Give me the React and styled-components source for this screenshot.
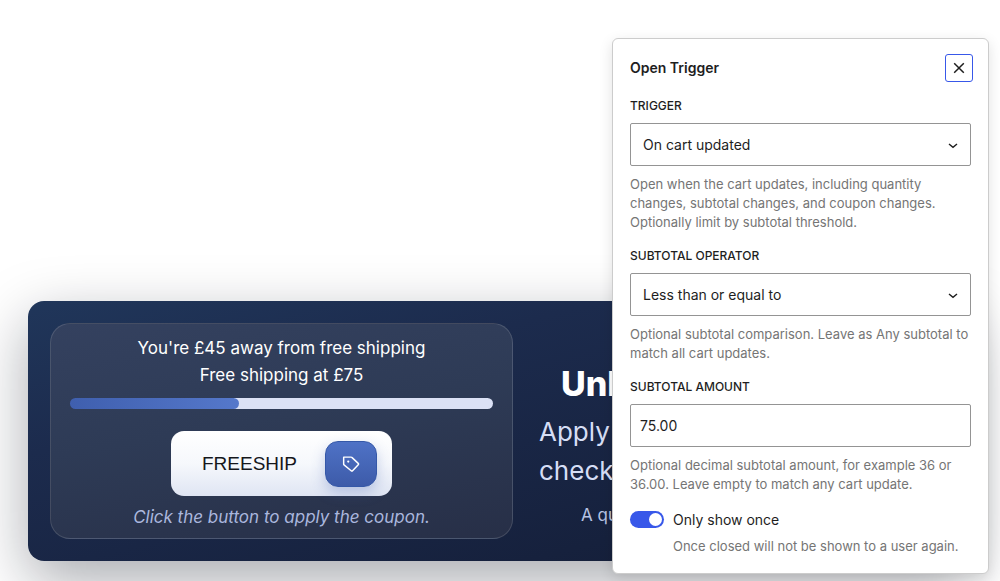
import React, { useState } from "react";
import styled, { createGlobalStyle } from "styled-components";

const GlobalStyle = createGlobalStyle`
  *, *::before, *::after {
    box-sizing: border-box;
  }

  body {
    margin: 0;
    background: #fff;
    color: #1e1e1e;
    font-family: Inter, "Liberation Sans", sans-serif;
    overflow: hidden;
  }
`;

const Page = styled.main`
  position: relative;
  min-height: 100vh;
  padding: 301px 28px 20px;
`;

const Banner = styled.section`
  display: grid;
  grid-template-columns: 463fr 411fr;
  gap: 26px;
  padding: 22px;
  border-radius: 16px;
  background: linear-gradient(165deg, #20365a 0%, #1c2b4d 30%, #131c35 100%);
  box-shadow: 0 20px 60px rgba(10, 15, 30, 0.35);
`;

const CouponCard = styled.div`
  display: flex;
  flex-direction: column;
  align-items: center;
  padding: 11px 19px 7px;
  border: 1px solid rgba(255, 255, 255, 0.13);
  border-radius: 20px;
  background: linear-gradient(170deg, #34415f 0%, #2e3b56 45%, #272f47 100%);
  color: #fff;
`;

const Message = styled.p`
  margin: 0;
  font-size: 17px;
  line-height: 27px;
`;

const Track = styled.div`
  width: 100%;
  height: 11px;
  margin: 9px 0 22px;
  border-radius: 6px;
  background: linear-gradient(90deg, transparent 20px, #dbe1f5 20px);
`;

const Fill = styled.div`
  height: 100%;
  border-radius: 6px;
  background: linear-gradient(90deg, #3f5fae, #5578cb);
`;

const CouponBox = styled.div`
  display: flex;
  align-items: center;
  gap: 28px;
  height: 65px;
  padding: 0 15px 0 31px;
  border-radius: 13px;
  background: linear-gradient(180deg, #fff 0%, #f6f8fc 50%, #dfe5f3 100%);
`;

const Code = styled.span`
  color: #15171c;
  font: 19px "Liberation Sans", sans-serif;
`;

const ApplyButton = styled.button`
  display: flex;
  align-items: center;
  justify-content: center;
  width: 52px;
  height: 46px;
  padding: 0;
  border: 1px solid #3558a8;
  border-radius: 13px;
  background: linear-gradient(180deg, #4f72c6, #3d5ba9);
  box-shadow: 0 6px 14px rgba(70, 100, 180, 0.3);
  color: #fff;
`;

const CardNote = styled.p`
  margin: 8px 0 0;
  color: #aab7de;
  font-size: 17px;
  font-style: italic;
  line-height: 27px;
`;

const Pitch = styled.div`
  padding-top: 40px;
  white-space: nowrap;
`;

const Heading = styled.h2`
  margin: 0 0 7px;
  padding-left: 22px;
  color: #fff;
  font-size: 34px;
  font-weight: 800;
  line-height: 42px;
`;

const Lead = styled.p`
  margin: 0;
  color: #d6def5;
  font-size: 26px;
  line-height: 39px;
`;

const Small = styled.p`
  margin: 12px 0 0;
  padding-left: 42px;
  color: #b6c2e4;
  font-size: 17px;
  line-height: 26px;
`;

const Popover = styled.form`
  position: absolute;
  top: 38px;
  right: 11px;
  display: flex;
  flex-direction: column;
  gap: 16px;
  width: 377px;
  padding: 15px 17px 17px;
  border: 1px solid #ccc;
  border-radius: 6px;
  background: #fff;
  box-shadow: 0 4px 14px rgba(0, 0, 0, 0.12);
`;

const PopoverHeader = styled.header`
  display: flex;
  align-items: center;
  justify-content: space-between;
  height: 28px;
  margin-right: -2px;
`;

const Title = styled.h3`
  margin: 0;
  font-size: 14px;
  font-weight: 600;
  line-height: 20px;
`;

const CloseButton = styled.button`
  display: flex;
  align-items: center;
  justify-content: center;
  width: 28px;
  height: 28px;
  padding: 0;
  border: 1px solid #3858e9;
  border-radius: 3px;
  background: #fff;
  color: #1e1e1e;
`;

const Field = styled.div`
  display: flex;
  flex-direction: column;
  gap: 9px;
`;

const Label = styled.label`
  font-size: 12px;
  font-weight: 500;
  line-height: 16px;
  text-transform: uppercase;
`;

const SelectWrapper = styled.div`
  position: relative;
`;

const Select = styled.select`
  display: block;
  width: 100%;
  height: 43px;
  padding: 0 32px 0 12px;
  border: 1px solid #949494;
  border-radius: 2px;
  appearance: none;
  background: #fff;
  color: #1e1e1e;
  font: 14px Inter, sans-serif;
`;

const Chevron = styled.svg`
  position: absolute;
  top: 50%;
  right: 13px;
  width: 10px;
  height: 6px;
  margin-top: -2px;
  pointer-events: none;
`;

const Input = styled.input`
  width: 100%;
  height: 43px;
  padding: 0 9px;
  border: 1px solid #949494;
  border-radius: 2px;
  background: #fff;
  color: #1e1e1e;
  font: 14px Inter, sans-serif;
`;

const Hint = styled.p`
  margin: 0;
  color: #757575;
  font-size: 13px;
  line-height: 19px;
`;

const ToggleRow = styled.div`
  display: grid;
  grid-template-columns: 34px 1fr;
  gap: 8px 9px;
  align-items: center;

  ${Hint} {
    grid-column: 2;
  }
`;

const Toggle = styled.input`
  width: 34px;
  height: 17px;
  margin: 0;
  padding: 2px;
  border-radius: 9px;
  appearance: none;
  background: ${props => (props.checked ? "#3858e9" : "#949494")};

  &::before {
    content: "";
    display: block;
    width: 13px;
    height: 13px;
    margin-left: ${props => (props.checked ? "auto" : "0")};
    border-radius: 50%;
    background: #fff;
  }
`;

const ToggleLabel = styled.label`
  font-size: 14px;
  line-height: 19px;
`;

const TagIcon = () => (
  <svg width="22" height="22" viewBox="0 0 24 24" fill="none" aria-hidden="true">
    <path
      d="M4 4.5h8.2a1 1 0 0 1 .7.3l7 6.5a1 1 0 0 1 0 1.5l-6.2 6.6a1 1 0 0 1-1.5 0L4.4 13a1 1 0 0 1-.4-.8V4.5Z"
      stroke="currentColor"
      strokeWidth="1.6"
      strokeLinejoin="round"
    />
    <circle cx="9" cy="9.3" r="1.2" fill="currentColor" />
  </svg>
);

const CloseIcon = () => (
  <svg width="12" height="12" viewBox="0 0 12 12" fill="none" aria-hidden="true">
    <path d="M1.2 1.2l9.6 9.6M10.8 1.2l-9.6 9.6" stroke="currentColor" strokeWidth="1.5" />
  </svg>
);

const SelectField = props => (
  <Field>
    <Label htmlFor={props.id}>{props.label}</Label>
    <SelectWrapper>
      <Select id={props.id} defaultValue={props.options[0]}>
        {props.options.map(option => (
          <option key={option}>{option}</option>
        ))}
      </Select>
      <Chevron viewBox="0 0 10 6" fill="none" aria-hidden="true">
        <path d="M1 1l4 3.4L9 1" stroke="#1e1e1e" strokeWidth="1.4" />
      </Chevron>
    </SelectWrapper>
    <Hint>{props.hint}</Hint>
  </Field>
);

const CouponBanner = ({ total, remaining }) => (
  <Banner>
    <CouponCard>
      <Message>You're £{remaining} away from free shipping</Message>
      <Message>Free shipping at £{total}</Message>
      <Track>
        <Fill style={{ width: `${((total - remaining) / total) * 100}%` }} />
      </Track>
      <CouponBox>
        <Code>FREESHIP</Code>
        <ApplyButton type="button" aria-label="Apply coupon">
          <TagIcon />
        </ApplyButton>
      </CouponBox>
      <CardNote>Click the button to apply the coupon.</CardNote>
    </CouponCard>
    <Pitch>
      <Heading>Unl</Heading>
      <Lead>
        Apply
        <br />
        check
      </Lead>
      <Small>A qu</Small>
    </Pitch>
  </Banner>
);

const TriggerPopover = () => {
  const [once, setOnce] = useState(true);

  return (
    <Popover>
      <PopoverHeader>
        <Title>Open Trigger</Title>
        <CloseButton type="button" aria-label="Close">
          <CloseIcon />
        </CloseButton>
      </PopoverHeader>
      <SelectField
        id="trigger"
        label="Trigger"
        options={["On cart updated"]}
        hint="Open when the cart updates, including quantity changes, subtotal changes, and coupon changes. Optionally limit by subtotal threshold."
      />
      <SelectField
        id="operator"
        label="Subtotal operator"
        options={["Less than or equal to", "Any subtotal"]}
        hint="Optional subtotal comparison. Leave as Any subtotal to match all cart updates."
      />
      <Field>
        <Label htmlFor="amount">Subtotal amount</Label>
        <Input id="amount" type="text" inputMode="decimal" defaultValue="75.00" />
        <Hint>
          Optional decimal subtotal amount, for example 36 or 36.00. Leave empty to match any cart
          update.
        </Hint>
      </Field>
      <ToggleRow>
        <Toggle
          id="once"
          type="checkbox"
          role="switch"
          checked={once}
          onChange={event => setOnce(event.target.checked)}
        />
        <ToggleLabel htmlFor="once">Only show once</ToggleLabel>
        <Hint>Once closed will not be shown to a user again.</Hint>
      </ToggleRow>
    </Popover>
  );
};

const App = () => (
  <Page>
    <GlobalStyle />
    <CouponBanner total={75} remaining={45} />
    <TriggerPopover />
  </Page>
);

export default App;
